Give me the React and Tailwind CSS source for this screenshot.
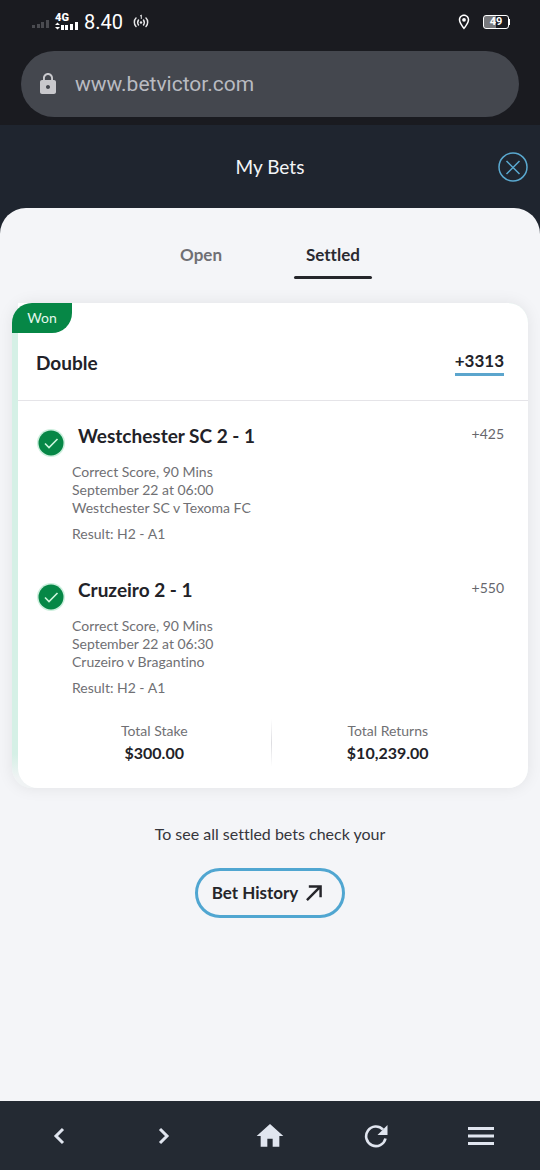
import { MdHome, MdLock, MdOutlineLocationOn } from 'react-icons/md'

const bets = [
  {
    title: 'Westchester SC 2 - 1',
    odds: '+425',
    details: ['Correct Score, 90 Mins', 'September 22 at 06:00', 'Westchester SC v Texoma FC'],
    result: 'Result: H2 - A1',
  },
  {
    title: 'Cruzeiro 2 - 1',
    odds: '+550',
    details: ['Correct Score, 90 Mins', 'September 22 at 06:30', 'Cruzeiro v Bragantino'],
    result: 'Result: H2 - A1',
  },
]

function StatusBar() {
  return (
    <div className="flex h-11 items-center justify-between pr-[30px] pl-8 text-white">
      <div className="flex items-center">
        <svg width="17" height="9" viewBox="0 0 17 9" fill="#4a4b50" className="mt-1" aria-hidden="true">
          <rect x="0" y="5" width="3" height="3" />
          <rect x="5" y="4" width="3" height="4" />
          <rect x="9" y="2" width="3" height="6" />
          <rect x="14" y="0" width="3" height="8" />
        </svg>
        <div className="ml-1.5 flex w-6 flex-col">
          <span className="font-['Roboto',sans-serif] text-[11px] leading-2 font-black">4G</span>
          <svg width="24" height="8" viewBox="0 0 24 8" fill="#fff" aria-hidden="true">
            <path d="M0 3l2.500-2.500L5 3zM0 5h5L2.500 7.500z" />
            <rect x="6" y="3" width="3" height="5" />
            <rect x="10" y="3" width="3" height="5" />
            <rect x="15" y="2" width="3" height="6" />
            <rect x="20" y="0" width="3" height="8" />
          </svg>
        </div>
        <span className="ml-[5px] font-['Roboto',sans-serif] text-xl leading-6">8.40</span>
        <svg width="16" height="16" viewBox="0 0 16 16" fill="none" stroke="#e8e8ea" strokeWidth="1.500" strokeLinecap="round" className="ml-2.5" aria-hidden="true">
          <path d="M3 4C.8 6 .8 10.500 3 12.500M13 4c2.200 2 2.200 6.500 0 8.500M5.500 6c-1 1.500-1 3.500 0 5M10.500 6c1 1.500 1 3.500 0 5" />
          <path d="M7.300 2L8.300 1v3.500" strokeWidth="1" />
          <circle cx="8" cy="8.500" r="1.200" fill="#e8e8ea" stroke="none" />
        </svg>
      </div>
      <div className="flex items-center gap-2.5">
        <MdOutlineLocationOn size={18} aria-hidden="true" />
        <div className="flex items-center">
          <span className="flex h-3.5 w-[26px] items-center justify-center rounded-[3px] border border-white bg-linear-to-r from-[#77787c] from-50% to-transparent to-50% font-['Roboto',sans-serif] text-[11px] leading-3 font-bold">
            49
          </span>
          <span className="h-1.5 w-px bg-white" />
        </div>
      </div>
    </div>
  )
}

function Bet({ bet }) {
  return (
    <li className="flex gap-[7px]">
      <svg width="28" height="28" viewBox="0 0 28 28" fill="none" className="mt-[11px] shrink-0" aria-hidden="true">
        <circle cx="14" cy="14" r="14" fill="#ccefdd" />
        <circle cx="14" cy="14" r="12.500" fill="#068746" />
        <path d="M8 14.500l4 4 8.500-8.500" stroke="#cdf5dc" strokeWidth="1.600" />
      </svg>
      <div className="min-w-0 flex-1">
        <div className="flex justify-between pl-1.5">
          <h3 className="pt-1.5 text-[19px] leading-6 font-bold text-[#222228]">{bet.title}</h3>
          <span className="pt-1 text-sm leading-6 text-[#66666c]">{bet.odds}</span>
        </div>
        <div className="mt-[15px] text-sm leading-[18px] text-[#707074]">
          {bet.details.map(line => <p key={line}>{line}</p>)}
          <p className="mt-2">{bet.result}</p>
        </div>
      </div>
    </li>
  )
}

function Total({ label, value }) {
  return (
    <div className="flex-1 text-center">
      <p className="text-sm leading-5 text-[#707074]">{label}</p>
      <p className="text-base leading-6 font-bold text-[#222228]">{value}</p>
    </div>
  )
}

export default function App() {
  return (
    <div className="flex min-h-screen flex-col bg-[#1f252f] font-['Lato',sans-serif] [font-variant-ligatures:none]">
      {/* Browser chrome */}
      <div className="bg-[#1a1b20] pb-2">
        <StatusBar />
        <div className="mx-[21px] mt-[7px] flex h-[66px] items-center rounded-full bg-[#44474e] pl-[15px]">
          <MdLock size={24} color="#c9c9cd" aria-hidden="true" />
          <input
            type="text"
            aria-label="Address"
            defaultValue="www.betvictor.com"
            className="ml-[15px] min-w-0 flex-1 bg-transparent pt-0.5 font-['Roboto',sans-serif] text-[21px] text-[#b9bbc1] outline-none"
          />
        </div>
      </div>

      <header className="relative flex h-[83px] items-center justify-center">
        <h1 className="text-[19px] leading-6 text-[#f3f5f8]">My Bets</h1>
        <button aria-label="Close" className="absolute right-3">
          <svg width="30" height="30" viewBox="0 0 30 30" fill="none" stroke="#5aa9d0" strokeWidth="1.500">
            <circle cx="15" cy="15" r="14" />
            <path d="M8.500 9l13 13M21.500 9l-13 13" />
          </svg>
        </button>
      </header>

      <main className="flex flex-1 flex-col items-center rounded-t-[26px] bg-[#f4f5f8]">
        {/* Tabs */}
        <div className="flex justify-center gap-[60px] pt-[35px]" role="tablist">
          <button role="tab" aria-selected="false" className="flex flex-col items-center px-3 text-[17px] leading-6 font-bold text-[#707074]">
            Open
          </button>
          <button role="tab" aria-selected="true" className="flex flex-col items-center text-[17px] leading-6 font-bold text-[#2a2a30]">
            <span className="px-3">Settled</span>
            <span className="mt-[9px] h-[3px] w-full rounded-full bg-[#25262b]" />
          </button>
        </div>

        {/* Bet slip */}
        <div className="mt-6 w-full px-3">
          <article className="relative rounded-[20px] bg-linear-to-b from-[#d5f0e6] from-93% to-[#f0f3f4] to-98% pl-1.5 shadow-[0_0_16px_rgba(0,0,0,0.08)]">
            <span className="absolute top-0 left-0 flex h-[30px] w-[60px] items-center justify-center rounded-tl-[20px] rounded-br-[20px] bg-[#068746] text-sm text-[#e4f7ec]">
              Won
            </span>
            <div className="rounded-[20px] rounded-tl-none bg-white">
              <div className="flex items-start justify-between border-b border-[#e5e4e8] pt-[46px] pr-6 pb-6 pl-[18px] text-[#222228]">
                <h2 className="text-[19px] leading-[27px] font-bold">Double</h2>
                <span className="border-b-3 border-[#5ba5cd] text-[17px] leading-6 font-bold">+3313</span>
              </div>
              <ul className="flex flex-col gap-[29px] pt-[17px] pr-6 pb-[22px] pl-[19px]">
                {bets.map(bet => <Bet key={bet.title} bet={bet} />)}
              </ul>
              <div className="flex items-center pr-6 pb-[21px] pl-5">
                <Total label="Total Stake" value="$300.00" />
                <div className="h-12 w-px bg-linear-to-b from-white via-[#dddde1] to-white" />
                <Total label="Total Returns" value="$10,239.00" />
              </div>
            </div>
          </article>
        </div>

        <p className="mt-[34px] text-base leading-6 text-[#36363c]">To see all settled bets check your</p>
        <a href="#history" className="mt-[22px] flex h-[50px] items-center gap-2 rounded-full border-3 border-[#50a6d1] pr-5 pl-3.5 text-[17px] font-bold text-[#25252a]">
          Bet History
          <svg width="16" height="16" viewBox="0 0 17 17" fill="none" stroke="#25252a" strokeWidth="2.600" aria-hidden="true">
            <path d="M1 16L15.500 1.500M3 1.500h12.500V13" />
          </svg>
        </a>
      </main>

      {/* Browser navigation */}
      <nav className="grid h-[69px] shrink-0 grid-cols-5 place-items-center bg-[#242a33] px-1.5 text-[#e0e5ef]">
        <button aria-label="Back">
          <svg width="12" height="18" viewBox="0 0 12 18" fill="none" stroke="currentColor" strokeWidth="3">
            <path d="M10 2L3 9l7 7" />
          </svg>
        </button>
        <button aria-label="Forward">
          <svg width="12" height="18" viewBox="0 0 12 18" fill="none" stroke="currentColor" strokeWidth="3">
            <path d="M2 2l7 7-7 7" />
          </svg>
        </button>
        <button aria-label="Home"><MdHome size={32} /></button>
        <button aria-label="Reload">
          <svg width="24" height="24" viewBox="0 0 24 24" fill="none">
            <path d="M21.500 14.500A9.800 9.800 0 1 1 19 5.500" stroke="currentColor" strokeWidth="2.600" />
            <path d="M23.500 1v10h-10z" fill="currentColor" />
          </svg>
        </button>
        <button aria-label="Menu">
          <svg width="26" height="18" viewBox="0 0 26 18" fill="currentColor">
            <path d="M0 0h26v3H0zM0 7.500h26v3H0zM0 15h26v3H0z" />
          </svg>
        </button>
      </nav>
    </div>
  )
}
